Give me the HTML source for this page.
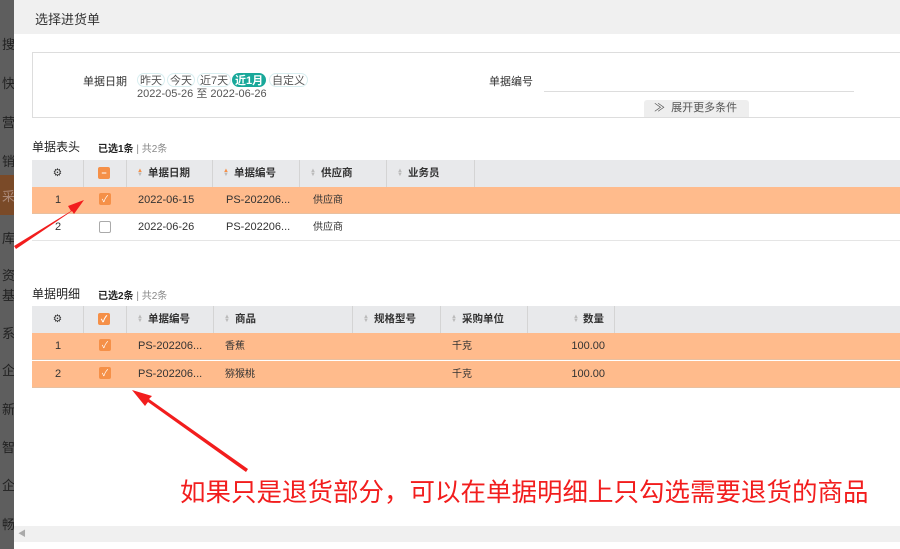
<!DOCTYPE html>
<html><head><meta charset="utf-8"><style>
*{margin:0;padding:0;box-sizing:border-box}
body{width:900px;height:549px;overflow:hidden;background:#fff;position:relative;font-family:"Liberation Sans","Noto Sans CJK SC",sans-serif;font-size:11px;color:#333}
.side{position:absolute;left:0;top:0;width:14px;height:549px;background:#5e5e5e;overflow:hidden}
.side div{position:absolute;left:2px;font-size:13px;color:#222}
.hdr{position:absolute;left:14px;top:0;width:886px;height:34px;background:#f0f0f0}
.hdr span{position:absolute;left:21px;top:9px;font-size:13px;color:#333}
.box{position:absolute;left:32px;top:52px;width:880px;height:66px;border:1px solid #ddd}
.abs{position:absolute}
.tag{position:absolute;top:73px;height:14px;line-height:14px;padding:0 2px;border-radius:7px;border:1px solid #d8eef0;color:#555;font-size:11px}
.sec{position:absolute;font-size:12px;color:#222}
.cnt{position:absolute;font-size:10px;color:#222}
.cnt b{font-weight:bold}
.cnt i{font-style:normal;color:#888}
.row{position:absolute;left:32px;width:868px;height:27px}
.th{background:#e8e9eb}
.or{background:#ffbb8c;border-bottom:1px solid #e8c0a0}
.wh{border-bottom:1px solid #e5e5e5}
.c{position:absolute;top:0;height:27px;line-height:27px;font-size:11px}
.th .c{border-right:1px solid #d4d4d4;font-weight:bold;font-size:10.5px}
.ar{display:inline-block;width:7px;margin-right:4px;font-size:6px;line-height:4px;vertical-align:middle;color:#bbb}
.cb{position:absolute;width:12px;height:12px;border-radius:2px;background:#f59048;top:7px;color:#fff;font-size:9px;line-height:12px;text-align:center}
.cbw{position:absolute;width:12px;height:12px;border-radius:2px;border:1px solid #aaa;background:#fff;top:7px}
</style></head><body>
<div class="side">
<div style="top:34px">搜</div><div style="top:73px">快</div><div style="top:112px">营</div><div style="top:151px">销</div>
<div style="top:175px;left:0;width:14px;height:40px;background:#7a4a28"></div><div style="top:186px;color:#a87">采</div>
<div style="top:228px">库</div><div style="top:265px">资</div><div style="top:285px">基</div><div style="top:323px">系</div><div style="top:360px">企</div><div style="top:399px">新</div><div style="top:437px">智</div><div style="top:475px">企</div><div style="top:514px">畅</div>
</div>
<div class="hdr"><span>选择进货单</span></div>
<div class="box"></div>
<div class="abs" style="left:83px;top:73px;font-size:11px">单据日期</div>
<div class="tag" style="left:137px">昨天</div>
<div class="tag" style="left:167px">今天</div>
<div class="tag" style="left:197px">近7天</div>
<div class="tag" style="left:232px;background:#19a89a;color:#fff;font-weight:bold;border-color:#19a89a">近1月</div>
<div class="tag" style="left:269px">自定义</div>
<div class="abs" style="left:137px;top:85px;font-size:11px;color:#555">2022-05-26 至 2022-06-26</div>
<div class="abs" style="left:489px;top:73px;font-size:11px">单据编号</div>
<div class="abs" style="left:544px;top:91px;width:310px;height:1px;background:#ddd"></div>
<div class="abs" style="left:644px;top:100px;width:105px;height:17px;background:#eee;border-radius:3px 3px 0 0;font-size:11px;color:#555;line-height:16px;padding-left:10px">≫&nbsp; 展开更多条件</div>

<div class="sec" style="left:32px;top:138px">单据表头</div>
<div class="cnt" style="left:98px;top:140px"><b>已选1条</b> <i>| 共2条</i></div>
<div class="row th" style="top:160px">
<div class="c" style="left:0;width:52px;text-align:center;font-weight:normal">⚙</div>
<div class="c" style="left:52px;width:43px"><div class="cb" style="left:14px">−</div></div>
<div class="c" style="left:95px;width:86px;padding-left:10px"><span class="ar" style="color:#f59048">▲<br><span style="color:#bbb">▼</span></span>单据日期</div>
<div class="c" style="left:181px;width:87px;padding-left:10px"><span class="ar" style="color:#f59048">▲<br><span style="color:#bbb">▼</span></span>单据编号</div>
<div class="c" style="left:268px;width:87px;padding-left:10px"><span class="ar">▲<br>▼</span>供应商</div>
<div class="c" style="left:355px;width:88px;padding-left:10px"><span class="ar">▲<br>▼</span>业务员</div>
</div>
<div class="row or" style="top:187px">
<div class="c" style="left:0;width:52px;text-align:center">1</div>
<div class="cb" style="left:67px;top:6px">✓</div>
<div class="c" style="left:106px">2022-06-15</div>
<div class="c" style="left:194px">PS-202206...</div>
<div class="c" style="left:281px;font-size:10px">供应商</div>
</div>
<div class="row wh" style="top:214px">
<div class="c" style="left:0;width:52px;text-align:center">2</div>
<div class="cbw" style="left:67px;top:7px"></div>
<div class="c" style="left:106px">2022-06-26</div>
<div class="c" style="left:194px">PS-202206...</div>
<div class="c" style="left:281px;font-size:10px">供应商</div>
</div>

<div class="sec" style="left:32px;top:285px">单据明细</div>
<div class="cnt" style="left:98px;top:287px"><b>已选2条</b> <i>| 共2条</i></div>
<div class="row th" style="top:306px">
<div class="c" style="left:0;width:52px;text-align:center;font-weight:normal">⚙</div>
<div class="c" style="left:52px;width:43px"><div class="cb" style="left:14px">✓</div></div>
<div class="c" style="left:95px;width:87px;padding-left:10px"><span class="ar">▲<br>▼</span>单据编号</div>
<div class="c" style="left:182px;width:139px;padding-left:10px"><span class="ar">▲<br>▼</span>商品</div>
<div class="c" style="left:321px;width:88px;padding-left:10px"><span class="ar">▲<br>▼</span>规格型号</div>
<div class="c" style="left:409px;width:87px;padding-left:10px"><span class="ar">▲<br>▼</span>采购单位</div>
<div class="c" style="left:496px;width:87px;text-align:right;padding-right:10px"><span class="ar">▲<br>▼</span>数量</div>
</div>
<div class="row or" style="top:333px">
<div class="c" style="left:0;width:52px;text-align:center">1</div>
<div class="cb" style="left:67px;top:6px">✓</div>
<div class="c" style="left:106px">PS-202206...</div>
<div class="c" style="left:193px;font-size:10px">香蕉</div>
<div class="c" style="left:420px;font-size:10px">千克</div>
<div class="c" style="left:496px;width:77px;text-align:right">100.00</div>
</div>
<div class="row or" style="top:361px">
<div class="c" style="left:0;width:52px;text-align:center">2</div>
<div class="cb" style="left:67px;top:6px">✓</div>
<div class="c" style="left:106px">PS-202206...</div>
<div class="c" style="left:193px;font-size:10px">猕猴桃</div>
<div class="c" style="left:420px;font-size:10px">千克</div>
<div class="c" style="left:496px;width:77px;text-align:right">100.00</div>
</div>

<div class="abs" style="left:14px;top:526px;width:886px;height:16px;background:#f0f0f0"><span style="position:absolute;left:4px;top:2px;font-size:8px;color:#aaa">◀</span></div>

<div class="abs" style="left:180px;top:474px;font-size:25.5px;color:#f21d1d;white-space:nowrap;font-family:'Noto Sans CJK SC',sans-serif;line-height:34px">如果只是退货部分，可以在单据明细上只勾选需要退货的商品</div>

<svg class="abs" style="left:0;top:0" width="900" height="549">
<polygon points="14,246 71,211 68,206 84,200 74,214 72,211 16,249" fill="#f21d1d"/>
<polygon points="246,472 148,402 145,406 132,390 152,396 149,399 248,469" fill="#f21d1d"/>
</svg>
</body></html>
